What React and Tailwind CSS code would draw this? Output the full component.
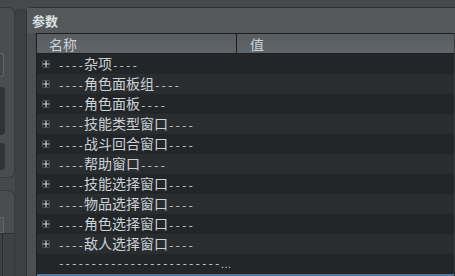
import React from 'react';

const groups = [
  '杂项',
  '角色面板组',
  '角色面板',
  '技能类型窗口',
  '战斗回合窗口',
  '帮助窗口',
  '技能选择窗口',
  '物品选择窗口',
  '角色选择窗口',
  '敌人选择窗口',
];

function Dashes({ n }) {
  return <span className="font-['Liberation_Mono',monospace] text-[10.83px]">{'-'.repeat(n)}</span>;
}

function PlusBox() {
  return (
    <div className="flex h-[8px] w-[8px] shrink-0 items-center justify-center rounded-[2px] border border-[#55585b] bg-[#1a1c1e]">
      <svg width="6" height="6" viewBox="0 0 6 6">
        <path d="M0 3H6M3 0V6" stroke="#d8dbde" strokeWidth="1.2" />
      </svg>
    </div>
  );
}

function Row({ label, idx }) {
  const bg = idx % 2 === 0 ? 'bg-[#232628]' : 'bg-[#2a2d30]';
  return (
    <div className={`flex h-[20px] items-center pl-[5px] ${bg}`}>
      <PlusBox />
      <div className="ml-[8px] flex items-baseline whitespace-nowrap text-[#ccd1d6]">
        <Dashes n={4} />
        <span className="text-[14px] leading-[20px]">{label}</span>
        <Dashes n={4} />
      </div>
    </div>
  );
}

export default function App() {
  return (
    <div className="flex h-[276px] w-[455px] overflow-hidden bg-[#46494c] font-['Noto_Sans_CJK_SC','Liberation_Sans',sans-serif]">
      {/* left panels, cut off by the edge */}
      <div className="flex w-[15px] shrink-0 flex-col">
        <div className="h-[7px]" />
        <div className="flex h-[171px] flex-col rounded-r-[6px] border-y border-r border-[#36393c] bg-[#4a4d50]">
          <div className="mt-[45px] h-[24px] w-[4px] rounded-r-[3px] border-y border-r border-[#606366] bg-[#44474a]" />
          <div className="mt-[10px] h-[48px] w-[5px] rounded-r-[4px] bg-[#303336]" />
          <div className="mt-[8px] h-[27px] w-[5px] rounded-r-[4px] bg-[#303336]" />
        </div>
        <div className="h-[12px]" />
        <div className="flex flex-1 flex-col rounded-tr-[6px] border-t border-r border-[#36393c] bg-[#4a4d50]">
          <div className="mt-[26px] h-[16px] w-[4px] border-y border-r border-[#606366] bg-[#505356]" />
          <div className="flex flex-1 border-t border-[#2e3033] bg-[#3f4245]">
            <div className="ml-[2px] w-[1px] bg-[#2a2c2f]" />
          </div>
        </div>
      </div>

      {/* splitter */}
      <div className="mt-[9px] w-[11px] shrink-0 bg-[#3d4043]" />

      {/* parameter group */}
      <div className="mt-[7px] flex flex-1 flex-col rounded-tl-[6px] border-t border-l border-[#2f3235] bg-[#4c4f52]">
        <div className="flex h-[25px] items-center bg-[#54585b] pl-[5px] pt-[1px] text-[13px] font-bold text-[#dde0e3]">
          参数
        </div>
        <div className="flex flex-1 pl-[9px]">
          <div className="flex flex-1 flex-col border-t border-l border-r border-[#1d1f21] border-r-[#3a3d40]">
            <div className="flex h-[20px] shrink-0 border-b border-[#1d1f21] bg-linear-to-b from-[#595d60] to-[#60656a] text-[14px] text-[#cdd2d7]">
              <div className="flex w-[200px] items-center border-r border-[#1d1f21] pl-[12px] pt-[2px]">名称</div>
              <div className="flex items-center pl-[13px] pt-[2px]">值</div>
            </div>
            {groups.map((g, i) => (
              <Row key={g} label={g} idx={i} />
            ))}
            <div className="flex h-[20px] items-center bg-[#232628] pl-[21px] text-[#ccd1d6] whitespace-nowrap">
              <Dashes n={25} />
              <span className="font-['Liberation_Sans',sans-serif] text-[11px]">…</span>
            </div>
            <div className="flex-1 bg-[#4b7aae]" />
          </div>
        </div>
      </div>
    </div>
  );
}
